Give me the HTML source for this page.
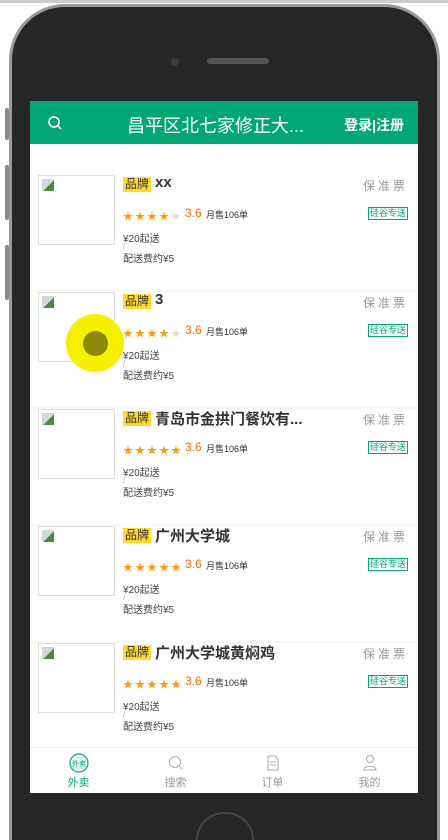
<!DOCTYPE html>
<html><head><meta charset="utf-8"><style>
*{margin:0;padding:0;box-sizing:border-box}
html,body{width:448px;height:840px;overflow:hidden}
body{background:#fff;position:relative;font-family:"Liberation Sans","Noto Sans CJK SC",sans-serif}
.wrap{position:absolute;left:0;top:0;width:448px;height:840px;overflow:hidden}
.top{position:absolute;left:0;top:0;width:448px;height:3px;background:#ccc}
.phone{position:absolute;left:9px;top:4px;width:431px;height:836px;border-radius:56px 56px 0 0;background:#262626;border:3px solid #9a9a9a;border-bottom:0}
.btn{position:absolute;left:5px;width:4px;background:#888;border-radius:2px}
.cam{position:absolute;left:159px;top:51px;width:8px;height:8px;border-radius:50%;background:#3a3a3a}
.spk{position:absolute;left:195px;top:51px;width:62px;height:6px;border-radius:3px;background:#555}
.home{position:absolute;left:196px;top:812px;width:58px;height:28px;border-radius:29px 29px 0 0;border:2px solid #444;border-bottom:0}
.screen{position:absolute;left:30px;top:101px;width:388px;height:692px;background:#fff;overflow:hidden}
.hdr{position:absolute;left:0;top:0;width:388px;height:43px;background:#02a774;color:#fff}
.hdr .t{position:absolute;left:97px;top:11px;font-size:18px}
.hdr .r{position:absolute;right:14px;top:14px;font-size:14px;font-weight:bold}
.item{position:absolute;left:0;width:388px;height:117px;border-bottom:2px solid #f8f8f8}
.img{position:absolute;left:8px;top:0;width:77px;height:70px;border:1px solid #ddd}
.img i{position:absolute;left:3px;top:3px;width:12px;height:12px;background:linear-gradient(135deg,#cfd8e0 55%,#4a8a3a 56%)}
.brand{position:absolute;left:93px;top:2px;background:#ffd930;font-size:12px;padding:0 2px;line-height:15px;color:#333}
.name{position:absolute;left:125px;top:-1px;font-size:15px;font-weight:bold;color:#333}
.sup{position:absolute;right:10px;top:2px;font-size:12px;color:#999;letter-spacing:3px}
.stars{position:absolute;left:93px;top:33px;font-size:10px;color:#ff9a0d;letter-spacing:2px}
.stars b{color:#ddd;font-weight:normal}
.sc{position:absolute;left:155px;top:31px;font-size:12px;color:#f56c00}
.sale{position:absolute;left:176px;top:33px;font-size:9px;color:#333}
.tag{position:absolute;right:10px;top:32px;font-size:9px;color:#02a774;border:1px solid #02a774;padding:0 1px;line-height:11px}
.d1{position:absolute;left:93px;top:55px;font-size:10px;color:#444}
.d2{position:absolute;left:93px;top:75px;font-size:10px;color:#444}
.sl{position:absolute;left:93px;top:67px;font-size:8px;color:#aaa}
.tab{position:absolute;left:0;top:646px;width:388px;height:46px;border-top:1px solid #eee;background:#fff}
.ti{position:absolute;top:0;width:97px;text-align:center;font-size:11px;color:#999}
.ti svg{display:block;margin:5px auto 1px}
.dot{position:absolute;left:66px;top:314px;width:58px;height:58px;border-radius:50%;background:#f5f000}
.dot i{position:absolute;left:17px;top:17px;width:25px;height:25px;border-radius:50%;background:#8c8a06}
</style></head><body><div class="wrap">
<div class="top"></div>
<div class="btn" style="top:108px;height:32px"></div>
<div class="btn" style="top:165px;height:55px"></div>
<div class="btn" style="top:245px;height:55px"></div>
<div class="phone"><div class="cam"></div><div class="spk"></div></div>
<div class="home"></div>
<div class="screen">
<div class="hdr">
<svg style="position:absolute;left:17px;top:14px" width="16" height="16" viewBox="0 0 16 16"><circle cx="7" cy="7" r="5" fill="none" stroke="#fff" stroke-width="1.6"/><path d="M11 11l3 3" stroke="#fff" stroke-width="1.6"/></svg>
<div class="t">昌平区北七家修正大...</div>
<div class="r">登录|注册</div>
</div>

<div class="item" style="top:74px"><div class="img"><i></i></div><span class="brand">品牌</span><span class="name">xx</span><span class="sup">保准票</span><span class="stars">★★★★<b>★</b></span><span class="sc">3.6</span><span class="sale">月售106单</span><span class="tag">硅谷专送</span><span class="d1">¥20起送</span><span class="sl">/</span><span class="d2">配送费约¥5</span></div>
<div class="item" style="top:191px"><div class="img"><i></i></div><span class="brand">品牌</span><span class="name">3</span><span class="sup">保准票</span><span class="stars">★★★★<b>★</b></span><span class="sc">3.6</span><span class="sale">月售106单</span><span class="tag">硅谷专送</span><span class="d1">¥20起送</span><span class="sl">/</span><span class="d2">配送费约¥5</span></div>
<div class="item" style="top:308px"><div class="img"><i></i></div><span class="brand">品牌</span><span class="name">青岛市金拱门餐饮有...</span><span class="sup">保准票</span><span class="stars">★★★★★</span><span class="sc">3.6</span><span class="sale">月售106单</span><span class="tag">硅谷专送</span><span class="d1">¥20起送</span><span class="sl">/</span><span class="d2">配送费约¥5</span></div>
<div class="item" style="top:425px"><div class="img"><i></i></div><span class="brand">品牌</span><span class="name">广州大学城</span><span class="sup">保准票</span><span class="stars">★★★★★</span><span class="sc">3.6</span><span class="sale">月售106单</span><span class="tag">硅谷专送</span><span class="d1">¥20起送</span><span class="sl">/</span><span class="d2">配送费约¥5</span></div>
<div class="item" style="top:542px"><div class="img"><i></i></div><span class="brand">品牌</span><span class="name">广州大学城黄焖鸡</span><span class="sup">保准票</span><span class="stars">★★★★★</span><span class="sc">3.6</span><span class="sale">月售106单</span><span class="tag">硅谷专送</span><span class="d1">¥20起送</span><span class="sl">/</span><span class="d2">配送费约¥5</span></div>

<div class="tab">
<div class="ti" style="left:0;color:#02a774"><svg width="20" height="20" viewBox="0 0 20 20"><circle cx="10" cy="10" r="9" fill="#e6f6ef" stroke="#02a774" stroke-width="1.2"/><text x="10" y="13" font-size="7" text-anchor="middle" fill="#02a774" font-family="Noto Sans CJK SC">外卖</text></svg>外卖</div>
<div class="ti" style="left:97px"><svg width="20" height="20" viewBox="0 0 20 20"><circle cx="9" cy="9" r="5.5" fill="none" stroke="#aaa" stroke-width="1"/><path d="M13 13l3 3" stroke="#aaa"/></svg>搜索</div>
<div class="ti" style="left:194px"><svg width="20" height="20" viewBox="0 0 20 20"><path d="M5 3h7l3 3v11H5z" fill="none" stroke="#aaa"/><path d="M7 9h6M7 12h6" stroke="#aaa"/></svg>订单</div>
<div class="ti" style="left:291px"><svg width="20" height="20" viewBox="0 0 20 20"><circle cx="10" cy="6" r="3.5" fill="none" stroke="#aaa"/><path d="M4 17c0-5 12-5 12 0z" fill="none" stroke="#aaa"/></svg>我的</div>
</div>
</div>
<div class="dot"><i></i></div>
</div></body></html>
